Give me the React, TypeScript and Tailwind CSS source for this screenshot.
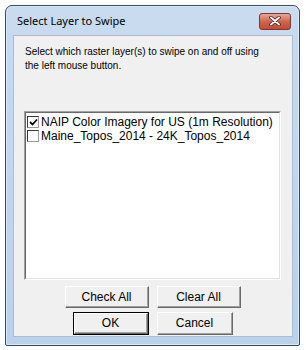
import React from "react";

function Check({ checked }: { checked: boolean }) {
  return (
    <div className="w-[12px] h-[12px] bg-white border-t border-l border-t-[#3a3a3a] border-l-[#3a3a3a] border-r border-b border-r-[#9a9a9a] border-b-[#9a9a9a] flex items-center justify-center shrink-0">
      {checked && (
        <svg width="9" height="9" viewBox="0 0 9 9">
          <path d="M1 4 L3.5 6.5 L8 1.5" stroke="#000" strokeWidth="1.8" fill="none" />
        </svg>
      )}
    </div>
  );
}

function Btn({ label, w, def }: { label: string; w: string; def?: boolean }) {
  return (
    <div className={`${w} ${def ? "border border-black" : ""}`}>
      <div className="h-full border-t border-l border-t-white border-l-white border-r border-b border-r-[#696969] border-b-[#696969]">
        <div className="h-full border-r border-b border-r-[#a0a0a0] border-b-[#a0a0a0] bg-[#f0f0f0] flex items-center justify-center text-[12px] text-black">
          {label}
        </div>
      </div>
    </div>
  );
}

export default function App() {
  return (
    <div className="w-[306px] h-[350px] bg-white pt-[5px] pl-[5px]" style={{ fontFamily: '"Liberation Sans", Arial, sans-serif' }}>
      <div className="w-[295px] h-[341px] border border-[#3b4a5a] rounded-t-[7px] rounded-b-[2px] bg-gradient-to-b from-[#c9dbef] to-[#b9d1ea] flex flex-col overflow-hidden shadow-[inset_0_0_0_1px_#d9e8f7]">
        <div className="h-[29px] flex items-center justify-between pl-[11px] pr-[8px] shrink-0">
          <span className="text-[11px] text-black mt-[2px]" style={{ fontFamily: '"Noto Sans", "Open Sans", sans-serif' }}>
            Select Layer to Swipe
          </span>
          <div className="w-[32px] h-[17px] rounded-[3px] border border-[#7a3a30] bg-gradient-to-b from-[#e6a797] via-[#d2644e] to-[#c44a34] flex items-center justify-center mt-[1px]">
            <svg width="12" height="10" viewBox="0 0 12 10">
              <path d="M2 1.5 L10 8.5 M10 1.5 L2 8.5" stroke="#3a1a14" strokeWidth="3.4" strokeLinecap="round" />
              <path d="M2 1.5 L10 8.5 M10 1.5 L2 8.5" stroke="#ffffff" strokeWidth="2" strokeLinecap="round" />
            </svg>
          </div>
        </div>
        <div className="mx-[7px] w-[280px] h-[302px] bg-[#f0f0f0] border border-[#a9bed6] flex flex-col">
          <div className="pl-[11px] pt-[9px] text-[10px] leading-[14px] text-black">
            <div>Select which raster layer(s) to swipe on and off using</div>
            <div>the left mouse button.</div>
          </div>
          <div className="ml-[10px] mt-[38px] w-[257px] h-[169px] border-t border-l border-t-[#a0a0a0] border-l-[#a0a0a0] border-r border-b border-r-white border-b-white">
            <div className="h-full border-t border-l border-t-[#696969] border-l-[#696969] border-r border-b border-r-[#e3e3e3] border-b-[#e3e3e3] bg-white pt-[2px] pl-[1px]">
              <div className="flex items-center h-[14px] gap-[2px] text-[12px] text-black">
                <Check checked={true} />
                <span>NAIP Color Imagery for US (1m Resolution)</span>
              </div>
              <div className="flex items-center h-[14px] gap-[2px] text-[12px] text-black">
                <Check checked={false} />
                <span>Maine_Topos_2014 - 24K_Topos_2014</span>
              </div>
            </div>
          </div>
          <div className="flex justify-center gap-[8px] mt-[6px] h-[22px]">
            <Btn label="Check All" w="w-[84px]" />
            <Btn label="Clear All" w="w-[84px]" />
          </div>
          <div className="flex justify-center gap-[8px] mt-[4px] h-[23px]">
            <Btn label="OK" w="w-[76px]" def />
            <Btn label="Cancel" w="w-[76px]" />
          </div>
        </div>
      </div>
    </div>
  );
}
